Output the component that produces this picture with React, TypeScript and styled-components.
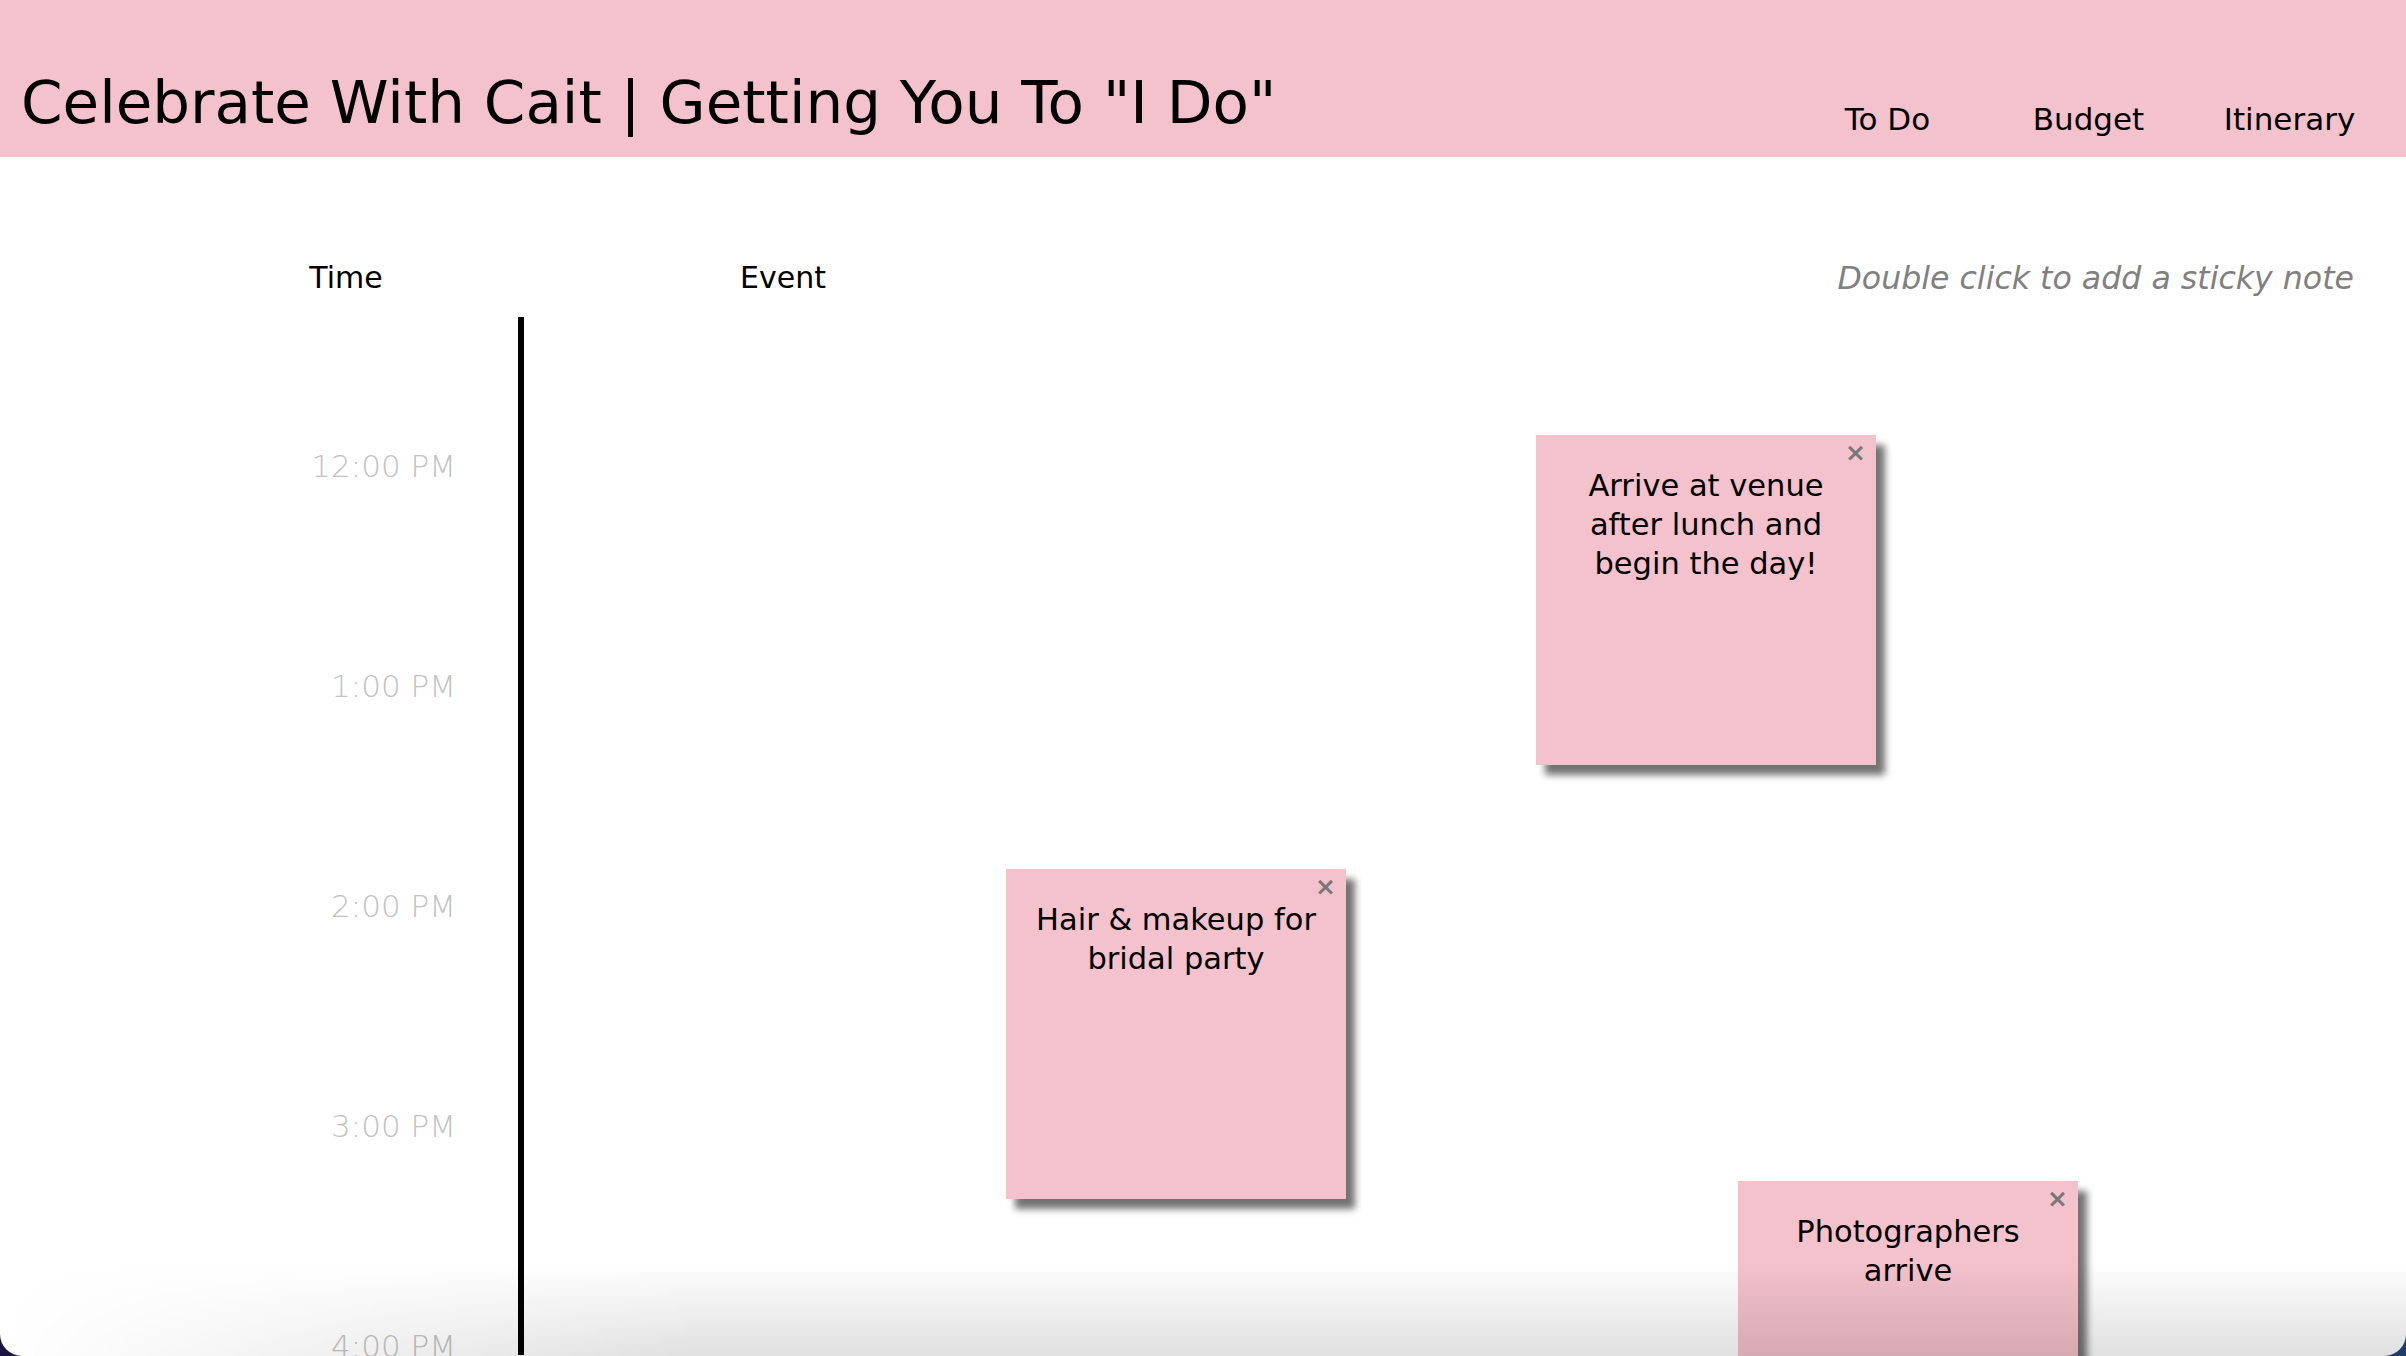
import * as React from 'react'
import styled, { createGlobalStyle } from 'styled-components'

const pink = '#f4c2cc'
const fontStack = `"DejaVu Sans", "Noto Sans", sans-serif`

const GlobalStyle = createGlobalStyle`
    html, body {
        margin: 0;
        padding: 0;
        height: 100%;
        background: linear-gradient(to right, #1c1440, #1f3d6c);
        font-family: ${fontStack};
    }
    #root {
        height: 100%;
    }
`

const Page = styled.div`
    position: relative;
    height: 100vh;
    overflow: hidden;
    background-color: #fff;
    border-radius: 0 0 22px 22px;
    color: #000;
`

const Header = styled.header`
    display: flex;
    align-items: flex-end;
    justify-content: space-between;
    height: 157px;
    padding: 0 16px 0 21px;
    box-sizing: border-box;
    background-color: ${pink};
`
const Title = styled.h1`
    margin: 0 0 22px 0;
    font-size: 59.5px;
    line-height: 64px;
    font-weight: 400;
    white-space: nowrap;
`
const Nav = styled.nav`
    display: flex;
    margin-bottom: 18px;
`
const NavItem = styled.a`
    width: 201px;
    text-align: center;
    font-size: 31px;
    line-height: 40px;
    color: #000;
    text-decoration: none;
    cursor: pointer;
`

const ColumnHeads = styled.div`
    display: flex;
    align-items: center;
    padding: 101px 52px 0 172px;
    margin-bottom: 19px;
    font-size: 30px;
    line-height: 40px;
`
const HeadCell = styled.div<{ $w: number }>`
    width: ${(p) => p.$w}px;
    text-align: center;
`
const Hint = styled.div`
    margin-left: auto;
    font-size: 31.6px;
    font-style: italic;
    color: #808080;
`

const Board = styled.div`
    display: flex;
    height: calc(100vh - 318px);
`
const TimeColumn = styled.div`
    width: 518px;
    flex-shrink: 0;
    padding: 39px 62px 0 0;
    box-sizing: border-box;
`
const TimeSlot = styled.div`
    display: flex;
    align-items: center;
    justify-content: flex-end;
    height: 220px;
    font-size: 31px;
    font-weight: 200;
    color: #c2c2c2;
`
const EventArea = styled.div`
    position: relative;
    flex: 1;
    border-left: 6px solid #000;
`

const Sticky = styled.div`
    position: absolute;
    width: 340px;
    height: 330px;
    padding: 31px 24px;
    box-sizing: border-box;
    background-color: ${pink};
    box-shadow: 9px 10px 7px rgba(0, 0, 0, 0.55);
    text-align: center;
    font-size: 30.5px;
    line-height: 39px;
`
const CloseButton = styled.span`
    position: absolute;
    top: 4px;
    right: 10px;
    font-size: 25px;
    font-weight: 700;
    line-height: 28px;
    color: #777;
    cursor: pointer;
`

const BottomFade = styled.div`
    position: absolute;
    left: 0;
    right: 0;
    bottom: 0;
    height: 95px;
    pointer-events: none;
    background: linear-gradient(to bottom, rgba(0, 0, 0, 0), rgba(0, 0, 0, 0.12));
    -webkit-mask-image: linear-gradient(to right, transparent 0, black 700px);
    mask-image: linear-gradient(to right, transparent 0, black 700px);
`

const times = ['12:00 PM', '1:00 PM', '2:00 PM', '3:00 PM', '4:00 PM']

const notes = [
    { x: 1012, y: 118, text: 'Arrive at venue after lunch and begin the day!' },
    { x: 482, y: 552, text: 'Hair & makeup for bridal party' },
    { x: 1214, y: 864, text: 'Photographers arrive' },
]

export default function App() {
    return (
        <>
            <GlobalStyle />
            <Page>
                <Header>
                    <Title>Celebrate With Cait | Getting You To "I Do"</Title>
                    <Nav>
                        <NavItem>To Do</NavItem>
                        <NavItem>Budget</NavItem>
                        <NavItem>Itinerary</NavItem>
                    </Nav>
                </Header>
                <ColumnHeads>
                    <HeadCell $w={348}>Time</HeadCell>
                    <HeadCell $w={526}>Event</HeadCell>
                    <Hint>Double click to add a sticky note</Hint>
                </ColumnHeads>
                <Board>
                    <TimeColumn>
                        {times.map((t) => (
                            <TimeSlot key={t}>{t}</TimeSlot>
                        ))}
                    </TimeColumn>
                    <EventArea>
                        {notes.map((n) => (
                            <Sticky key={n.text} style={{ left: n.x, top: n.y }}>
                                <CloseButton>×</CloseButton>
                                {n.text}
                            </Sticky>
                        ))}
                    </EventArea>
                </Board>
                <BottomFade />
            </Page>
        </>
    )
}
